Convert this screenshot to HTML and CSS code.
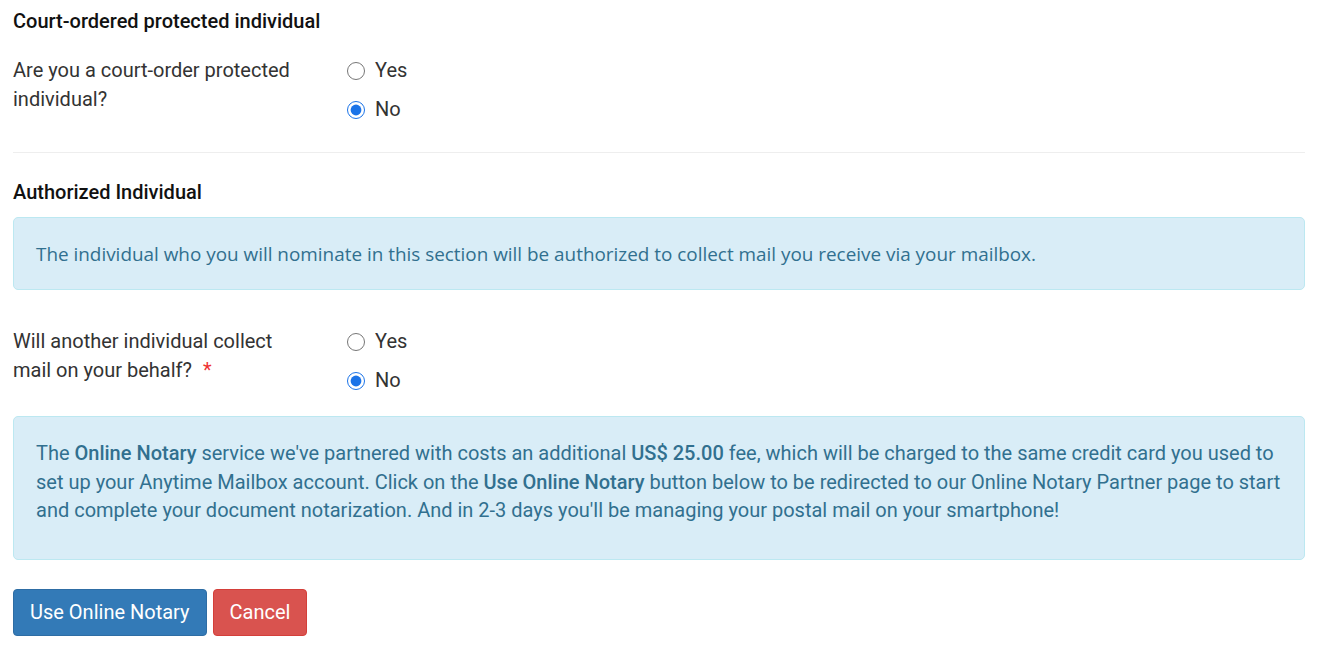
FILE: index.html
```html
<!DOCTYPE html>
<html>
  <head>
    <meta charset="utf-8" />
    <title>Mailbox Authorization</title>
    <link rel="stylesheet" href="styles.css">
  </head>

  <body>
    <div class="page">
      <!-- 保護対象者 -->
      <h4 class="section-title">Court-ordered protected individual</h4>
      <div class="form-row">
        <label class="row-label">Are you a court-order protected individual?</label>
        <div class="radio-group">
          <label class="radio"><input type="radio" name="protected"> Yes</label>
          <label class="radio"><input type="radio" name="protected" checked> No</label>
        </div>
      </div>

      <hr class="divider">

      <!-- 代理受取人 -->
      <h4 class="section-title">Authorized Individual</h4>
      <div class="alert alert-first">
        The individual who you will nominate in this section will be authorized to collect mail you receive via your mailbox.
      </div>

      <div class="form-row form-row-second">
        <label class="row-label">Will another individual collect mail on your behalf? <span class="required">*</span></label>
        <div class="radio-group">
          <label class="radio"><input type="radio" name="another"> Yes</label>
          <label class="radio"><input type="radio" name="another" checked> No</label>
        </div>
      </div>

      <div class="alert alert-notary">
        The <b>Online Notary</b> service we've partnered with costs an additional <b>US$ 25.00</b> fee, which will be charged to the same credit card you used to set up your Anytime Mailbox account. Click on the <b>Use Online Notary</b> button below to be redirected to our Online Notary Partner page to start and complete your document notarization. And in 2-3 days you'll be managing your postal mail on your smartphone!
      </div>

      <div class="actions">
        <button class="btn btn-primary">Use Online Notary</button>
        <button class="btn btn-danger">Cancel</button>
      </div>
    </div>
  </body>
</html>
```

FILE: styles.css
```css
* {
  box-sizing: border-box;
}
body {
  margin: 0;
  font-family: Roboto, "Liberation Sans", sans-serif;
  font-size: 20px;
  color: #333;
  background: #fff;
}

.page {
  width: 1318px;
  padding: 8px 13px 0 13px;
}

/* 見出し */
.section-title {
  margin: 0;
  font-size: 20px;
  font-weight: 500;
  line-height: 26px;
  color: #111;
}

/* フォーム行 */
.form-row {
  display: flex;
  margin-top: 22px;
}
.row-label {
  width: 334px;
  padding-right: 44px;
  line-height: 29px;
  color: #333;
}
.required {
  color: #e33;
  margin-left: 6px;
}
.radio-group {
  display: flex;
  flex-direction: column;
  gap: 10px;
}
.radio {
  display: flex;
  align-items: center;
  line-height: 29px;
  color: #333;
}
.radio input {
  width: 18px;
  height: 18px;
  margin: 0 10px 0 0;
  accent-color: #1a73e8;
}

.divider {
  border: 0;
  border-top: 1px solid #eee;
  margin: 28px 0 26px 0;
}

/* お知らせ */
.alert {
  background-color: #d9edf7;
  border: 1px solid #bce8f1;
  color: #31708f;
  border-radius: 5px;
  padding: 0 22px;
}
.alert-first {
  margin-top: 12px;
  height: 73px;
  display: flex;
  align-items: center;
  font-family: "Open Sans", Roboto, sans-serif;
  font-size: 18.9px;
}
.form-row-second {
  margin-top: 37px;
}
.alert-notary {
  margin-top: 21px;
  padding-top: 22px;
  padding-bottom: 34px;
  line-height: 28.5px;
}
.alert-notary b {
  font-weight: 500;
}

/* ボタン */
.actions {
  display: flex;
  gap: 6px;
  margin-top: 29px;
}
.btn {
  font-family: Roboto, "Liberation Sans", sans-serif;
  font-size: 20px;
  color: #fff;
  height: 47px;
  padding: 0 16px;
  border: 1px solid transparent;
  border-radius: 4px;
  cursor: pointer;
}
.btn-primary {
  background-color: #337ab7;
  border-color: #2e6da4;
}
.btn-danger {
  background-color: #d9534f;
  border-color: #d43f3a;
}
```
